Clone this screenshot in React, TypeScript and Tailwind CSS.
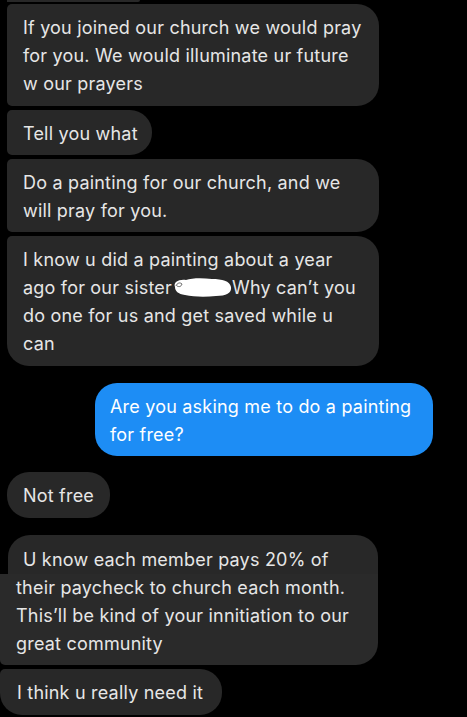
import React from "react";

const font = { fontFamily: "Inter, 'Open Sans', 'Liberation Sans', sans-serif" };

function Blob() {
  return (
    <svg width="60" height="22" viewBox="0 0 60 22" className="inline-block align-[-5px]">
      <path
        d="M3 10 C1 5 7 2 14 3 C20 1 30 1 40 2 C50 2 58 4 59 10 C60 16 54 19 44 19 C34 20 22 20 13 18 C6 17 3 14 3 10 Z"
        fill="#ffffff"
      />
      <path d="M4 9 C5 6 8 5 10 7 C9 10 7 10 5 9" fill="none" stroke="#444" strokeWidth="0.8" />
    </svg>
  );
}

export default function App() {
  return (
    <div
      className="w-[467px] h-[717px] bg-black overflow-hidden flex flex-col text-[18px] leading-[28px] tracking-[0.2px] text-[#e6e6e6]"
      style={font}
    >
      <div className="ml-[7px] w-[133px] h-[2px] bg-[#282828] rounded-br-[6px] shrink-0" />

      <div className="mt-[2px] ml-[7px] w-[372px] bg-[#282828] rounded-tl-[5px] rounded-tr-[22px] rounded-br-[22px] rounded-bl-[5px] pl-[16px] pt-[10px] pb-[8px] shrink-0 whitespace-nowrap">
        If you joined our church we would pray
        <br />
        for you. We would illuminate ur future
        <br />
        w our prayers
      </div>

      <div className="mt-[4px] ml-[7px] w-[145px] bg-[#282828] rounded-tl-[5px] rounded-tr-[22px] rounded-br-[22px] rounded-bl-[5px] pl-[16px] pt-[10px] pb-[7px] shrink-0 whitespace-nowrap">
        Tell you what
      </div>

      <div className="mt-[4px] ml-[7px] w-[372px] bg-[#282828] rounded-tl-[5px] rounded-tr-[22px] rounded-br-[22px] rounded-bl-[5px] pl-[16px] pt-[10px] pb-[7px] shrink-0 whitespace-nowrap">
        Do a painting for our church, and we
        <br />
        will pray for you.
      </div>

      <div className="mt-[4px] ml-[7px] w-[372px] bg-[#282828] rounded-tl-[5px] rounded-tr-[22px] rounded-br-[22px] rounded-bl-[22px] pl-[16px] pt-[10px] pb-[8px] shrink-0 whitespace-nowrap">
        I know u did a painting about a year
        <br />
        ago for our sister
        <Blob />
        Why can’t you
        <br />
        do one for us and get saved while u
        <br />
        can
      </div>

      <div className="mt-[17px] ml-[95px] w-[338px] bg-[#1d8df5] text-white rounded-[22px] pl-[15px] pt-[10px] pb-[7px] shrink-0 whitespace-nowrap">
        Are you asking me to do a painting
        <br />
        for free?
      </div>

      <div className="mt-[16px] ml-[7px] w-[103px] bg-[#282828] rounded-[22px] pl-[16px] pt-[10px] pb-[8px] shrink-0 whitespace-nowrap">
        Not free
      </div>

      <div className="mt-[17px] flex flex-col shrink-0">
        <div className="ml-[8px] w-[370px] bg-[#282828] rounded-tl-[22px] rounded-tr-[22px] pl-[15px] pt-[11px] whitespace-nowrap">
          U know each member pays 20% of
        </div>
        <div className="w-[378px] bg-[#2a2a2a] rounded-br-[22px] rounded-bl-[5px] pl-[16px] pb-[7px] whitespace-nowrap">
          their paycheck to church each month.
          <br />
          This’ll be kind of your innitiation to our
          <br />
          great community
        </div>
      </div>

      <div className="mt-[4px] w-[222px] bg-[#282828] rounded-tl-[5px] rounded-tr-[22px] rounded-br-[22px] rounded-bl-[22px] pl-[17px] pt-[10px] pb-[8px] shrink-0 whitespace-nowrap">
        I think u really need it
      </div>
    </div>
  );
}
